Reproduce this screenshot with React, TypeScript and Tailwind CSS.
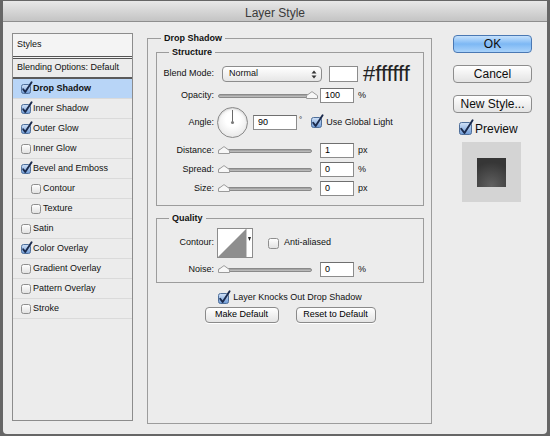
import React from "react";

type CheckProps = { checked?: boolean; size?: number };

function Check({ checked = false, size = 10 }: CheckProps) {
  return (
    <svg width={size} height={size} viewBox={`0 0 ${size} ${size}`} className="shrink-0 overflow-visible">
      <defs>
        <linearGradient id="cbOff" x1="0" y1="0" x2="0" y2="1">
          <stop offset="0" stopColor="#ffffff" />
          <stop offset="1" stopColor="#e0e0e0" />
        </linearGradient>
        <linearGradient id="cbOn" x1="0" y1="0" x2="0" y2="1">
          <stop offset="0" stopColor="#d2e3f8" />
          <stop offset="1" stopColor="#6e9ad6" />
        </linearGradient>
      </defs>
      <rect
        x="0.5"
        y="0.5"
        width={size - 1}
        height={size - 1}
        rx="2"
        fill={checked ? "url(#cbOn)" : "url(#cbOff)"}
        stroke={checked ? "#4f6f9a" : "#8e8e8e"}
      />
      {checked && (
        <path
          d={`M2.2 ${size * 0.52} L${size * 0.42} ${size - 2} L${size + 0.6} -1.8`}
          fill="none"
          stroke="#1a2a4c"
          strokeWidth="1.9"
          strokeLinecap="round"
          strokeLinejoin="round"
        />
      )}
    </svg>
  );
}

function Slider({ value }: { value: number }) {
  return (
    <div className="relative w-[99px] h-[15px] flex items-center shrink-0">
      <div className="w-[94px] h-[4px] rounded-full border border-[#8a8a8a] bg-linear-to-b from-[#9a9a9a] to-[#c4c4c4]" />
      <svg className="absolute top-[3px]" style={{ left: value * 88 }} width="12" height="8" viewBox="0 0 12 8">
        <path d="M0.5 7.5 V4.6 L6 0.6 L11.5 4.6 V7.5 Z" fill="#f7f7f7" stroke="#9b9b9b" />
      </svg>
    </div>
  );
}

function Field({ value, width = "w-[34px]" }: { value: string; width?: string }) {
  return (
    <div className={`${width} h-[15px] shrink-0 bg-white border border-[#8c8c8c] border-t-[#6f6f6f] pl-[4px] leading-[13px] text-[9px] text-black`}>
      {value}
    </div>
  );
}

function Label({ children }: { children: React.ReactNode }) {
  return <div className="w-[57px] shrink-0 text-right">{children}</div>;
}

function SliderRow({ label, value, text, unit, className }: { label: string; value: number; text: string; unit: string; className: string }) {
  return (
    <div className={`flex items-center h-[15px] ${className}`}>
      <Label>{label}</Label>
      <div className="ml-[4px]">
        <Slider value={value} />
      </div>
      <div className="ml-[3px]">
        <Field value={text} />
      </div>
      <span className="ml-[4px]">{unit}</span>
    </div>
  );
}

function SmallButton({ children, width }: { children: React.ReactNode; width: string }) {
  return (
    <div className={`${width} h-[16px] rounded-[4px] border border-[#8a8a8a] bg-linear-to-b from-white to-[#e4e4e4] flex items-center justify-center text-[9px] text-black shadow-[0_1px_0_#ffffff]`}>
      {children}
    </div>
  );
}

function BigButton({ children, primary = false }: { children: React.ReactNode; primary?: boolean }) {
  return (
    <div
      className={
        primary
          ? "w-[79px] h-[18px] rounded-[4px] border border-[#4a78b3] bg-linear-to-b from-[#c5e1fc] via-[#7db8f4] to-[#a9d2fa] flex items-center justify-center text-[12px] text-[#0d0d0d]"
          : "w-[79px] h-[18px] rounded-[4px] border border-[#8d8d8d] bg-linear-to-b from-white to-[#e3e3e3] flex items-center justify-center text-[12px] text-[#0d0d0d]"
      }
    >
      {children}
    </div>
  );
}

const styleItems = [
  { name: "Drop Shadow", checked: true, active: true },
  { name: "Inner Shadow", checked: true },
  { name: "Outer Glow", checked: true },
  { name: "Inner Glow", checked: false },
  { name: "Bevel and Emboss", checked: true },
  { name: "Contour", checked: false, sub: true },
  { name: "Texture", checked: false, sub: true },
  { name: "Satin", checked: false },
  { name: "Color Overlay", checked: true },
  { name: "Gradient Overlay", checked: false },
  { name: "Pattern Overlay", checked: false },
  { name: "Stroke", checked: false },
];

function StylesList() {
  return (
    <div className="w-[121px] h-[388px] shrink-0 border border-[#8c8c8c] bg-[#ececec] flex flex-col">
      <div className="h-[25px] bg-[#f4f4f4] pl-[4px] flex items-center border-b-[3px] border-double border-[#555555]">
        Styles
      </div>
      <div className="h-[20px] pl-[4px] flex items-center border-b-2 border-[#5a5a5a]">Blending Options: Default</div>
      {styleItems.map((item) => (
        <div
          key={item.name}
          className={`h-[20px] flex items-center border-b border-[#dadada] ${item.sub ? "pl-[18px]" : "pl-[8px]"} ${
            item.active ? "bg-[#b8d5f7] font-bold" : ""
          }`}
        >
          <Check checked={item.checked} />
          <span className="ml-[2px]">{item.name}</span>
        </div>
      ))}
    </div>
  );
}

function Dial() {
  return (
    <div className="relative w-[31px] h-[31px] shrink-0 rounded-full border border-[#8a8a8a] bg-[radial-gradient(circle_at_50%_40%,#ffffff_30%,#dedede)] shadow-[inset_0_1px_2px_rgba(0,0,0,0.15)]">
      <div className="absolute left-[14px] top-[2px] w-px h-[13px] bg-[#6a6a6a]" />
      <div className="absolute left-[13px] top-[13px] w-[3px] h-[3px] rounded-full bg-[#7a7a7a]" />
    </div>
  );
}

function ContourPicker() {
  return (
    <svg width="36" height="30" viewBox="0 0 36 30" className="shrink-0">
      <rect x="0.5" y="0.5" width="35" height="29" fill="#ffffff" stroke="#8c8c8c" />
      <polygon points="1,29 29,1 29,29" fill="#8e8e8e" />
      <line x1="29.5" y1="1" x2="29.5" y2="29" stroke="#c8c8c8" />
      <path d="M31 9 H34 L32.5 13 Z" fill="#222222" />
      <rect x="32" y="9" width="1" height="3" fill="#222222" />
    </svg>
  );
}

function SelectArrows() {
  return (
    <svg width="6" height="9" viewBox="0 0 6 9">
      <path d="M0.5 3.5 L3 0.5 L5.5 3.5 Z" fill="#333333" />
      <path d="M0.5 5.5 L3 8.5 L5.5 5.5 Z" fill="#333333" />
    </svg>
  );
}

export default function App() {
  return (
    <div className="w-[550px] h-[436px] bg-[#666666] pt-px px-[3px] pb-[2px] font-['Liberation_Sans',Arial,sans-serif] text-[9px] text-[#111111]">
      <div className="h-full flex flex-col bg-[#ececec] rounded-b-[4px] overflow-hidden">
        <div className="h-[21px] shrink-0 border-b border-[#8e8e8e] bg-linear-to-b from-[#e8e8e8] to-[#c4c4c4] flex items-center justify-center pt-[4px] text-[12px] text-[#3a3a3a]">
          Layer Style
        </div>

        <div className="flex flex-1 pl-[9px] pt-[11px]">
          <StylesList />

          <fieldset className="ml-[14px] w-[285px] h-[391px] shrink-0 border border-[#9c9c9c] pl-[8px] pr-[7px]">
            <legend className="ml-[5px] px-[3px] font-bold leading-[10px]">Drop Shadow</legend>

            <fieldset className="mt-[4px] border border-[#9c9c9c] pb-[9px]">
              <legend className="ml-[12px] px-[3px] font-bold leading-[10px]">Structure</legend>

              <div className="mt-[9px] flex items-center h-[16px]">
                <Label>Blend Mode:</Label>
                <div className="ml-[8px] w-[100px] h-[16px] rounded-[4px] border border-[#8c8c8c] bg-linear-to-b from-white to-[#e6e6e6] flex items-center justify-between pl-[6px] pr-[4px]">
                  <span>Normal</span>
                  <SelectArrows />
                </div>
                <div className="ml-[7px] w-[29px] h-[16px] bg-white border border-[#8c8c8c]" />
                <span className="ml-[5px] text-[22px] leading-none text-[#222222]">#ffffff</span>
              </div>

              <SliderRow className="mt-[6px]" label="Opacity:" value={1} text="100" unit="%" />

              <div className="mt-[4px] flex items-center h-[31px]">
                <Label>Angle:</Label>
                <div className="ml-[3px]">
                  <Dial />
                </div>
                <div className="ml-[5px]">
                  <Field value="90" width="w-[44px]" />
                </div>
                <span className="ml-[2px] self-start mt-[7px] text-[8px]">°</span>
                <div className="ml-[9px] flex items-center">
                  <Check checked size={11} />
                </div>
                <span className="ml-[4px]">Use Global Light</span>
              </div>

              <SliderRow className="mt-[5px]" label="Distance:" value={0} text="1" unit="px" />
              <SliderRow className="mt-[4px]" label="Spread:" value={0} text="0" unit="%" />
              <SliderRow className="mt-[4px]" label="Size:" value={0} text="0" unit="px" />
            </fieldset>

            <fieldset className="mt-[7px] border border-[#9c9c9c] pb-[5px]">
              <legend className="ml-[12px] px-[3px] font-bold leading-[10px]">Quality</legend>

              <div className="mt-[5px] flex items-center h-[30px]">
                <Label>Contour:</Label>
                <div className="ml-[3px] flex">
                  <ContourPicker />
                </div>
                <div className="ml-[15px] flex items-center">
                  <Check size={11} />
                </div>
                <span className="ml-[5px]">Anti-aliased</span>
              </div>

              <SliderRow className="mt-[4px]" label="Noise:" value={0} text="0" unit="%" />
            </fieldset>

            <div className="mt-[9px] h-[12px] flex items-center justify-center">
              <Check checked size={11} />
              <span className="ml-[4px]">Layer Knocks Out Drop Shadow</span>
            </div>

            <div className="mt-[3px] flex justify-center gap-[17px]">
              <SmallButton width="w-[74px]">Make Default</SmallButton>
              <SmallButton width="w-[80px]">Reset to Default</SmallButton>
            </div>
          </fieldset>

          <div className="ml-[21px] w-[79px] flex flex-col pt-[2px]">
            <BigButton primary>OK</BigButton>
            <div className="mt-[12px]">
              <BigButton>Cancel</BigButton>
            </div>
            <div className="mt-[12px]">
              <BigButton>New Style...</BigButton>
            </div>
            <div className="mt-[9px] flex items-center pl-[6px] h-[13px]">
              <Check checked size={13} />
              <span className="ml-[3px] text-[12px] text-[#0d0d0d]">Preview</span>
            </div>
            <div className="mt-[7px] ml-[9px] w-[59px] h-[60px] bg-[#d4d4d4] flex items-center justify-center">
              <div className="w-[29px] h-[29px] bg-[radial-gradient(circle_at_50%_95%,#606060,#363636_75%)]" />
            </div>
          </div>
        </div>
      </div>
    </div>
  );
}
